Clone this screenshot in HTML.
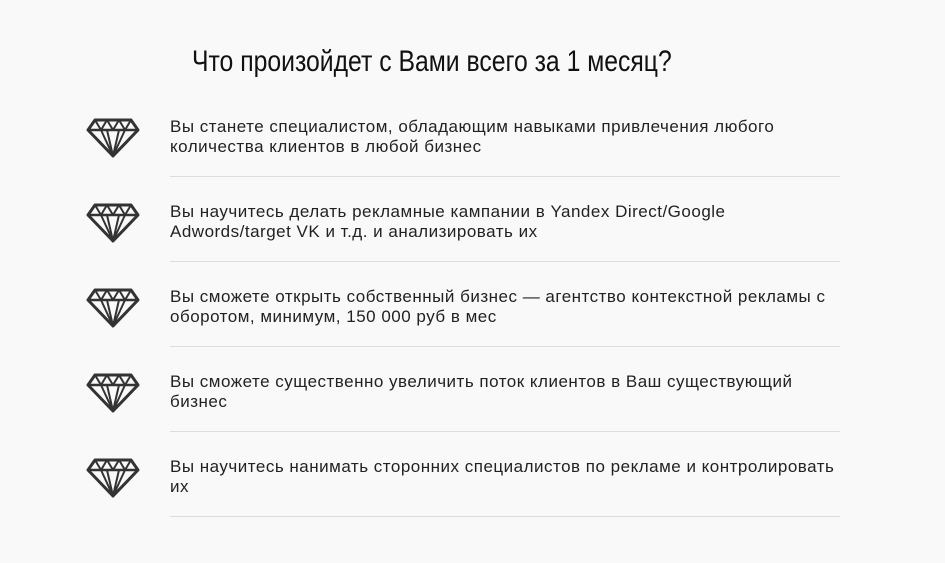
<!DOCTYPE html>
<html><head><meta charset="utf-8"><style>
body{margin:0;background:#f9f9f9;width:945px;height:563px;overflow:hidden;font-family:"Liberation Sans",sans-serif;color:#222}
h1{position:absolute;left:192px;top:45px;margin:0;font-weight:normal;font-size:30px;color:#111;white-space:nowrap;transform-origin:0 0;transform:scaleX(0.825)}
.item{position:absolute;left:0;width:945px;height:85px}
.item svg{position:absolute;left:86px;top:0px}
.item p{position:absolute;left:170px;top:-1px;margin:0;width:760px;font-size:17px;line-height:20px;letter-spacing:0.5px;white-space:nowrap}
.item .ln{position:absolute;left:170px;width:670px;top:58px;height:1px;background:#ddd}
</style></head><body>
<h1>Что произойдет с Вами всего за 1 месяц?</h1>
<div class="item" style="top:118px"><svg width="54" height="40" viewBox="0 0 54 40" fill="none" stroke="#333" stroke-width="3" stroke-linejoin="round"><path d="M9 2H45L52 12L27 38L2 12Z"/><path d="M2 12H52" stroke-width="2.5"/><path d="M9 2L15 12L21 2L27 12L33 2L39 12L45 2" stroke-width="2"/><path d="M15 12L27 38L39 12M21 12L27 38L33 12" stroke-width="2"/></svg><p>Вы станете специалистом, обладающим навыками привлечения любого<br>количества клиентов в любой бизнес</p><div class="ln"></div></div>
<div class="item" style="top:203px"><svg width="54" height="40" viewBox="0 0 54 40" fill="none" stroke="#333" stroke-width="3" stroke-linejoin="round"><path d="M9 2H45L52 12L27 38L2 12Z"/><path d="M2 12H52" stroke-width="2.5"/><path d="M9 2L15 12L21 2L27 12L33 2L39 12L45 2" stroke-width="2"/><path d="M15 12L27 38L39 12M21 12L27 38L33 12" stroke-width="2"/></svg><p>Вы научитесь делать рекламные кампании в Yandex Direct/Google<br>Adwords/target VK и т.д. и анализировать их</p><div class="ln"></div></div>
<div class="item" style="top:288px"><svg width="54" height="40" viewBox="0 0 54 40" fill="none" stroke="#333" stroke-width="3" stroke-linejoin="round"><path d="M9 2H45L52 12L27 38L2 12Z"/><path d="M2 12H52" stroke-width="2.5"/><path d="M9 2L15 12L21 2L27 12L33 2L39 12L45 2" stroke-width="2"/><path d="M15 12L27 38L39 12M21 12L27 38L33 12" stroke-width="2"/></svg><p>Вы сможете открыть собственный бизнес — агентство контекстной рекламы с<br>оборотом, минимум, 150 000 руб в мес</p><div class="ln"></div></div>
<div class="item" style="top:373px"><svg width="54" height="40" viewBox="0 0 54 40" fill="none" stroke="#333" stroke-width="3" stroke-linejoin="round"><path d="M9 2H45L52 12L27 38L2 12Z"/><path d="M2 12H52" stroke-width="2.5"/><path d="M9 2L15 12L21 2L27 12L33 2L39 12L45 2" stroke-width="2"/><path d="M15 12L27 38L39 12M21 12L27 38L33 12" stroke-width="2"/></svg><p>Вы сможете существенно увеличить поток клиентов в Ваш существующий<br>бизнес</p><div class="ln"></div></div>
<div class="item" style="top:458px"><svg width="54" height="40" viewBox="0 0 54 40" fill="none" stroke="#333" stroke-width="3" stroke-linejoin="round"><path d="M9 2H45L52 12L27 38L2 12Z"/><path d="M2 12H52" stroke-width="2.5"/><path d="M9 2L15 12L21 2L27 12L33 2L39 12L45 2" stroke-width="2"/><path d="M15 12L27 38L39 12M21 12L27 38L33 12" stroke-width="2"/></svg><p>Вы научитесь нанимать сторонних специалистов по рекламе и контролировать<br>их</p><div class="ln"></div></div>
</body></html>
